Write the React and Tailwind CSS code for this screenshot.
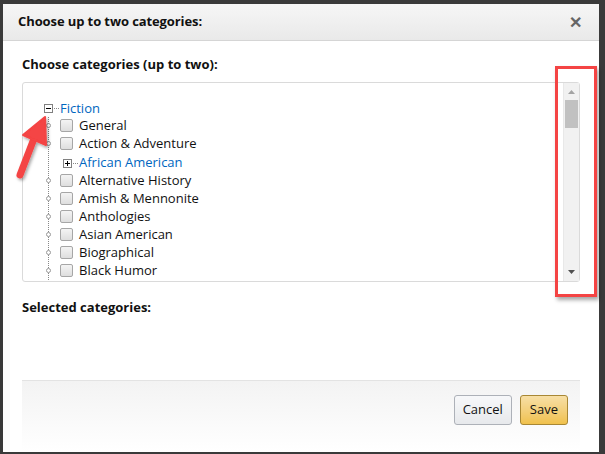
const items = [
  { label: "General" },
  { label: "Action & Adventure" },
  { label: "African American", folder: true },
  { label: "Alternative History" },
  { label: "Amish & Mennonite" },
  { label: "Anthologies" },
  { label: "Asian American" },
  { label: "Biographical" },
  { label: "Black Humor" },
];

function Box({ minus }) {
  return (
    <span className="relative w-[9px] h-[9px] border border-[#808080] bg-white flex items-center justify-center flex-shrink-0">
      <span className="absolute w-[5px] h-px bg-black" />
      {!minus && <span className="absolute h-[5px] w-px bg-black" />}
    </span>
  );
}

export default function App() {
  return (
    <div
      className="w-[605px] h-[454px] bg-[#3a3a3a] pt-[4px] pl-[3px] relative overflow-hidden"
      style={{ fontFamily: '"Open Sans", "Liberation Sans", Arial, sans-serif' }}
    >
      <div className="w-[596px] h-[448px] bg-white flex flex-col">
        {/* Header */}
        <div className="h-[37px] flex items-center justify-between px-[15px] border-b border-[#d5d5d5] bg-gradient-to-b from-[#f6f6f6] to-[#e9e9e9]">
          <h1 className="text-[13px] font-bold text-[#111] tracking-[-0.1px]">
            Choose up to two categories:
          </h1>
          <span className="text-[16px] font-bold text-[#666] leading-none mr-[2px]">✕</span>
        </div>

        {/* Body */}
        <div className="px-[19px] pt-[14px] flex-1 flex flex-col">
          <p className="text-[13px] font-bold text-[#111] mb-[7px]">
            Choose categories (up to two):
          </p>
          <div className="h-[200px] border border-[#dadada] rounded-[3px] flex">
            <div className="flex-1 pl-[21px] pt-[18px] text-[13px] text-[#111] overflow-hidden">
              <div className="flex items-center h-[16px]">
                <Box minus />
                <span className="w-[5px] border-t border-dotted border-[#888] mx-[1px]" />
                <span className="text-[#0066c0]">Fiction</span>
              </div>
              <div className="ml-[4px] border-l border-dotted border-[#888] pb-[4px]">
                {items.map((it) =>
                  it.folder ? (
                    <div key={it.label} className="flex items-center h-[19px] pl-[14px] pt-[2px]">
                      <Box />
                      <span className="w-[5px] border-t border-dotted border-[#888] mx-[1px]" />
                      <span className="text-[#0066c0]">{it.label}</span>
                    </div>
                  ) : (
                    <div key={it.label} className="flex items-center h-[18px]">
                      <span className="w-[5px] h-[5px] rounded-full border border-[#999] -ml-[3px] mr-[9px] bg-white" />
                      <span className="w-[13px] h-[13px] rounded-[2px] border border-[#a6a6a6] bg-gradient-to-b from-[#f4f4f4] to-[#dedede] mr-[6px]" />
                      <span>{it.label}</span>
                    </div>
                  )
                )}
              </div>
            </div>
            {/* scrollbar */}
            <div className="w-[16px] bg-[#f1f1f1] flex flex-col items-center border-l border-[#e8e8e8]">
              <svg width="9" height="6" viewBox="0 0 9 6" className="mt-[6px]">
                <polygon points="4.5,1 8,5 1,5" fill="#a3a3a3" />
              </svg>
              <div className="w-[13px] h-[28px] bg-[#c1c1c1] mt-[5px]" />
              <div className="flex-1" />
              <svg width="9" height="6" viewBox="0 0 9 6" className="mb-[6px]">
                <polygon points="1,1 8,1 4.5,5" fill="#505050" />
              </svg>
            </div>
          </div>

          <p className="text-[13px] font-bold text-[#111] mt-[16px]">Selected categories:</p>
          <div className="flex-1" />
        </div>

        {/* Footer */}
        <div className="mx-[19px] h-[72px] border-t border-[#e3e3e3] bg-gradient-to-b from-[#f3f3f3] to-white flex items-center justify-end gap-[8px] pr-[12px] pb-[14px]">
          <button className="h-[30px] px-[8px] text-[13px] text-[#111] rounded-[3px] border border-[#adb1b8] bg-gradient-to-b from-[#f7f8fa] to-[#e7e9ec]">
            Cancel
          </button>
          <button className="h-[30px] px-[9px] text-[13px] text-[#111] rounded-[3px] border border-[#a88734] bg-gradient-to-b from-[#f7dfa5] to-[#f0c14b]">
            Save
          </button>
        </div>
      </div>

      {/* annotation: red box */}
      <div className="absolute left-[555px] top-[66px] w-[42px] h-[231px] border-[3px] border-[#f44444] shadow-[2px_3px_4px_rgba(0,0,0,0.35)]" />

      {/* annotation: red arrow */}
      <svg className="absolute left-[8px] top-[110px]" width="52" height="78" viewBox="0 0 52 78">
        <defs>
          <filter id="sh" x="-50%" y="-50%" width="200%" height="200%">
            <feDropShadow dx="1.5" dy="2" stdDeviation="1.5" floodOpacity="0.35" />
          </filter>
        </defs>
        <g filter="url(#sh)" fill="#f44444" stroke="#f44444" strokeLinejoin="round" strokeLinecap="round">
          <line x1="12" y1="65" x2="27" y2="26" strokeWidth="7" />
          <polygon points="37,7 38,35 15,25" strokeWidth="2" />
        </g>
      </svg>
    </div>
  );
}
